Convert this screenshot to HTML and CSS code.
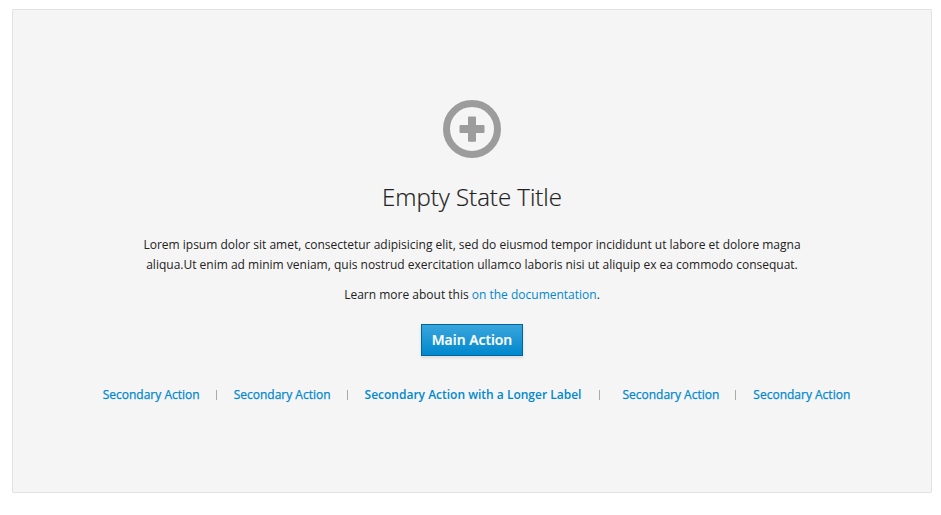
FILE: index.html
```html
<!DOCTYPE html>
<html lang="en">
<head>
<meta charset="utf-8">
<title>Empty State</title>
<link rel="stylesheet" href="styles.css">
</head>
<body>
<main class="empty-state">
  <svg class="icon" viewBox="0 0 58 58" aria-hidden="true">
    <circle cx="29" cy="29" r="25.5" fill="none" stroke="#9c9c9c" stroke-width="7"/>
    <path fill="#9c9c9c" d="M26 16.5h6a1 1 0 0 1 1 1v7.5h7.5a1 1 0 0 1 1 1v6a1 1 0 0 1-1 1H33v7.800a1 1 0 0 1-1 1h-6a1 1 0 0 1-1-1V33h-7.500a1 1 0 0 1-1-1v-6a1 1 0 0 1 1-1H25v-7.500a1 1 0 0 1 1-1z"/>
  </svg>
  <h1 class="title">Empty State Title</h1>
  <p class="text">Lorem ipsum dolor sit amet, consectetur adipisicing elit, sed do eiusmod tempor incididunt ut labore et dolore magna<br>aliqua.Ut enim ad minim veniam, quis nostrud exercitation ullamco laboris nisi ut aliquip ex ea commodo consequat.</p>
  <p class="text">Learn more about this <a href="#">on the documentation</a>.</p>
  <button class="main-action">Main Action</button>
  <nav class="secondary">
    <a href="#">Secondary Action</a><i class="sep"></i>
    <a href="#">Secondary Action</a><i class="sep"></i>
    <a href="#" class="strong">Secondary Action with a Longer Label</a><i class="sep wide"></i>
    <a href="#">Secondary Action</a><i class="sep"></i>
    <a href="#">Secondary Action</a>
  </nav>
</main>
</body>
</html>
```

FILE: styles.css
```css
* { box-sizing: border-box; }
body { margin: 0; background: #fff; color: #222; font: 12px/20px "Open Sans", sans-serif; }
.empty-state { display: flex; flex-direction: column; align-items: center; width: 920px; height: 484px; margin: 9px 0 0 12px; padding-top: 90px; background: #f5f5f5; border: 1px solid #e2e2e2; border-radius: 1px; text-align: center; }
.icon { display: block; width: 58px; height: 58px; }
.title { margin: 24px 0 23px; font-size: 24px; font-weight: 300; line-height: 30px; -webkit-text-stroke: .2px; }
.text { margin: 0 0 10px; white-space: nowrap; }
a { color: #0088ce; text-decoration: none; }
.main-action { width: 102px; height: 32px; margin: 9px 0 29px; padding: 0; border: 1px solid #00659c; background: linear-gradient(#39a5dc, #0088ce); box-shadow: 0 2px 3px rgba(0,0,0,.1); color: #fff; font: 600 14px/28px "Open Sans", sans-serif; -webkit-text-stroke: .2px; }
.secondary { display: flex; align-items: center; margin-left: 9px; white-space: nowrap; }
.secondary a { -webkit-text-stroke: .25px; }
.secondary .strong { font-weight: 600; -webkit-text-stroke: 0; }
.sep { width: 1px; height: 10px; margin: 0 17px 0 16px; background: #aaa; }
.wide { margin: 0 22px 0 18px; }
```
